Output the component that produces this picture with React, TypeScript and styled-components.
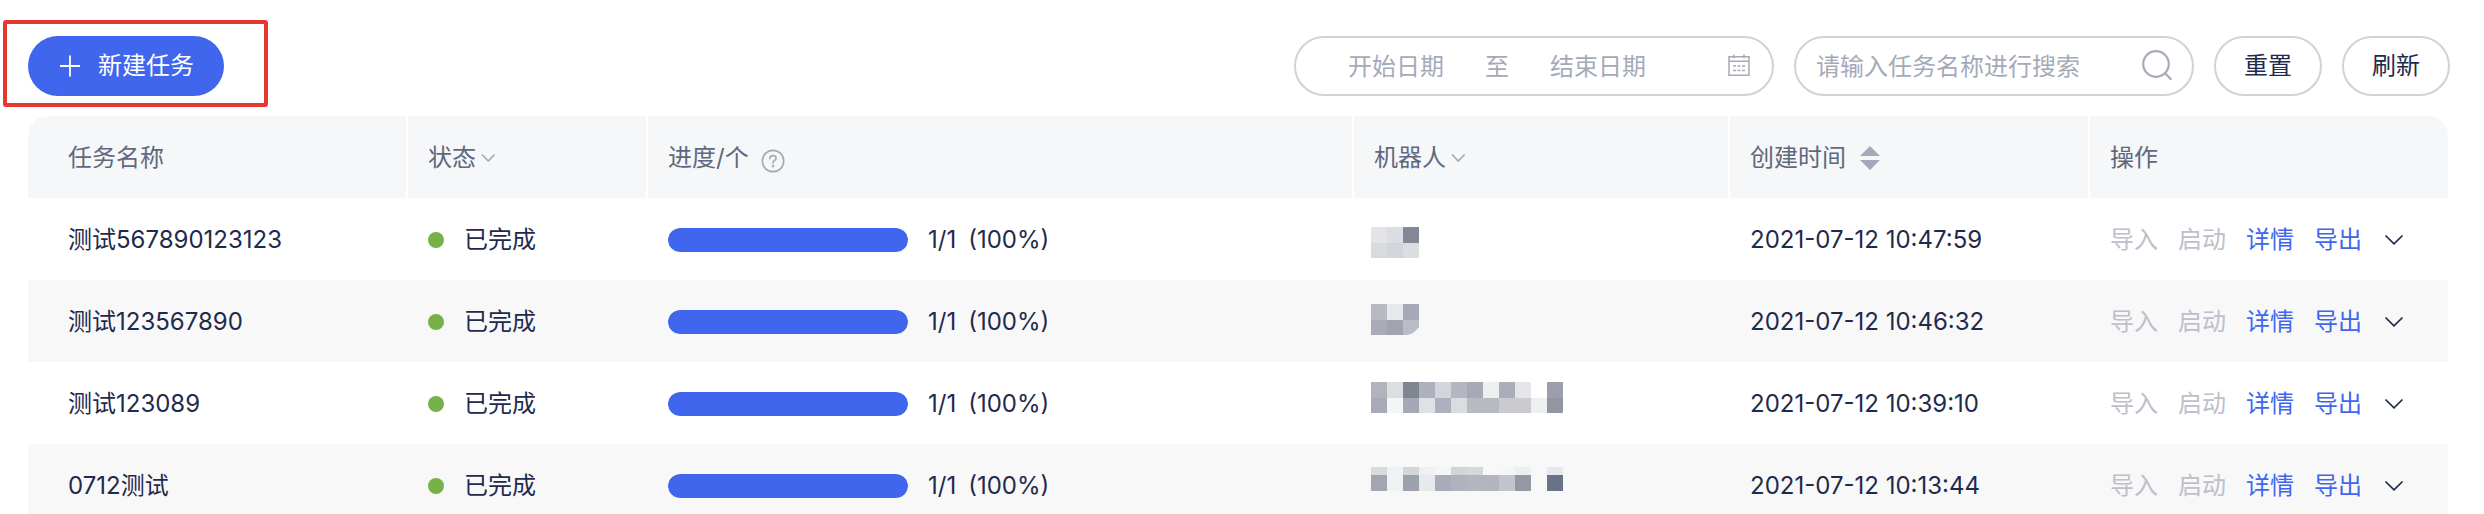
import React from "react";
import styled, { createGlobalStyle } from "styled-components";

const color = {
  primary: "#4066ee",
  text: "#1f2a4d",
  head: "#60687d",
  muted: "#a5aab8",
  disabled: "#bdc0ca",
  border: "#d0d1da",
  headBg: "#f5f7f8",
  stripe: "#f8f8f9",
  success: "#76b14a",
  mark: "#e23a31",
};

const GlobalStyle = createGlobalStyle`
  *, *::before, *::after { box-sizing: border-box; }
  body {
    margin: 0;
    overflow: hidden;
    background: #fff;
    color: ${color.text};
    font: 400 24px/36px Inter, "Noto Sans CJK SC", sans-serif;
  }
  button, input { font: inherit; color: inherit; }
  button { cursor: pointer; }
`;

const Page = styled.main`
  padding: 36px 34px 0 28px;
`;

const Toolbar = styled.header`
  display: flex;
  align-items: center;
  justify-content: space-between;
  margin-bottom: 20px;
`;

const Filters = styled.form`
  display: flex;
  gap: 20px;
`;

const Highlight = styled.div`
  position: relative;

  &::after {
    content: "";
    position: absolute;
    inset: -16px -44px -11px -25px;
    border: 4px solid ${color.mark};
    border-radius: 3px;
    pointer-events: none;
  }
`;

const PillButton = styled.button<{ $primary?: boolean }>`
  display: flex;
  align-items: center;
  gap: 16px;
  height: 60px;
  padding: 0 ${(p) => (p.$primary ? 30 : 28)}px;
  border: ${(p) => (p.$primary ? "none" : `2px solid ${color.border}`)};
  border-radius: 30px;
  background: ${(p) => (p.$primary ? color.primary : "#fff")};
  color: ${(p) => (p.$primary ? "#fff" : color.text)};
`;

const Field = styled.div<{ $width: number }>`
  display: flex;
  align-items: center;
  width: ${(p) => p.$width}px;
  height: 60px;
  padding: 2px 20px 0;
  border: 2px solid ${color.border};
  border-radius: 30px;
  background: #fff;
  color: ${color.muted};

  svg {
    flex: none;
    margin-left: auto;
  }
`;

const TextInput = styled.input<{ $center?: boolean }>`
  flex: ${(p) => (p.$center ? "0 0 160px" : "1")};
  min-width: 0;
  height: 36px;
  padding: 0;
  border: 0;
  outline: 0;
  background: none;
  color: ${color.text};
  text-align: ${(p) => (p.$center ? "center" : "left")};

  &::placeholder {
    color: ${color.muted};
    opacity: 1;
  }
`;

const RangeSeparator = styled.span`
  width: 42px;
  text-align: center;
`;

const TableWrap = styled.div`
  margin-right: 2px;
`;

const Table = styled.table`
  width: 100%;
  table-layout: fixed;
  border-spacing: 0;
`;

const HeadCell = styled.th`
  height: 82px;
  padding: 2px 20px 0;
  border-right: 2px solid #fff;
  background: ${color.headBg};
  color: ${color.head};
  font-weight: 400;
  text-align: left;

  &:first-child {
    padding-left: 40px;
    border-top-left-radius: 20px;
  }
  &:last-child {
    border-right: 0;
    border-top-right-radius: 20px;
  }
`;

const HeadLabel = styled.div<{ $gap?: number }>`
  display: flex;
  align-items: center;
  gap: ${(p) => p.$gap ?? 0}px;
`;

const IconButton = styled.button`
  display: flex;
  padding: 0;
  border: 0;
  background: none;
  color: ${color.muted};
`;

const Row = styled.tr`
  &:nth-child(even) {
    background: ${color.stripe};
  }
`;

const Cell = styled.td`
  height: 82px;
  padding: 2px 20px 0;

  &:first-child {
    padding-left: 40px;
  }
`;

const MosaicCell = styled(Cell)`
  padding: 0 17px;

  svg {
    display: block;
  }
`;

const Inline = styled.div`
  display: flex;
  align-items: center;
  gap: 20px;
`;

const Dot = styled.span`
  width: 16px;
  height: 16px;
  border-radius: 50%;
  background: ${color.success};
`;

const Track = styled.div`
  width: 240px;
  height: 24px;
  border-radius: 12px;
  background: #e9ecf3;
  overflow: hidden;
`;

const Fill = styled.div`
  height: 100%;
  border-radius: 12px;
  background: ${color.primary};
`;

const Count = styled.span`
  display: flex;
  gap: 12px;
`;

const Action = styled.button`
  padding: 0;
  border: 0;
  background: none;
  color: ${color.primary};
  white-space: nowrap;

  &:disabled {
    color: ${color.disabled};
    cursor: default;
  }
`;

const MoreButton = styled(IconButton)`
  color: ${color.text};
`;

const PlusIcon = () => (
  <svg width="24" height="24" viewBox="0 0 24 24" stroke="currentColor" strokeWidth="1.8" aria-hidden="true">
    <path d="M2 12H22M12 1.5V22.5" />
  </svg>
);

const CalendarIcon = () => (
  <svg width="24" height="26" viewBox="0 0 24 26" fill="none" stroke="currentColor" strokeWidth="1.5" aria-hidden="true">
    <path d="M1 2.8H21V21.2H1ZM1 7.2H21M6 0.5V4.2M16 0.5V4.2" />
    <path d="M5 12H17M5 16.5H17" strokeDasharray="3 1.5" />
  </svg>
);

const SearchIcon = () => (
  <svg width="32" height="34" viewBox="0 0 32 34" fill="none" stroke="currentColor" strokeWidth="2.2" strokeLinecap="round" aria-hidden="true">
    <circle cx="16" cy="14" r="12.8" />
    <path d="M25 23.2L30.8 29" />
  </svg>
);

const HelpIcon = () => (
  <svg width="24" height="30" viewBox="0 0 24 30" fill="none" stroke="currentColor" strokeWidth="1.7" strokeLinecap="round" aria-hidden="true">
    <circle cx="12" cy="18" r="10.7" />
    <path d="M8.9 15.4C8.9 13.7 10.1 12.6 12 12.6S15.1 13.7 15.1 15.2C15.1 17.4 12 17.5 12 20" />
    <circle cx="12" cy="23.2" r="0.5" />
  </svg>
);

const SmallChevron = () => (
  <svg width="24" height="24" viewBox="0 0 24 24" fill="none" stroke="currentColor" strokeWidth="1.7" aria-hidden="true">
    <path d="M6 8.5L12.3 15L18.6 8.5" />
  </svg>
);

const MoreChevron = () => (
  <svg width="24" height="24" viewBox="0 0 24 24" fill="none" stroke="currentColor" strokeWidth="1.7" aria-hidden="true">
    <path d="M3.5 7.5L12 15.8L20.5 7.5" />
  </svg>
);

const SortIcon = () => (
  <svg width="20" height="24" viewBox="0 0 20 24" fill="currentColor" aria-hidden="true">
    <path d="M10 0L20 10H0ZM10 24L20 14H0Z" />
  </svg>
);

type Tile = [x: number, y: number, fill: string];

interface Task {
  name: string;
  done: number;
  total: number;
  created: string;
  top: number;
  firstRow: number;
  rounded?: boolean;
  tiles: [string[], string[]];
}

const tasks: Task[] = [
  {
    name: "测试567890123123",
    done: 1,
    total: 1,
    created: "2021-07-12 10:47:59",
    top: 28,
    firstRow: 16,
    tiles: [
      ["#e3e4e8", "#dcdde2", "#838896"],
      ["#d9dade", "#d4d5da", "#dcdde1"],
    ],
  },
  {
    name: "测试123567890",
    done: 1,
    total: 1,
    created: "2021-07-12 10:46:32",
    top: 23,
    firstRow: 16,
    rounded: true,
    tiles: [
      ["#b6bac3", "#e7e8ec", "#a7aab6"],
      ["#a9acb7", "#a1a4b0", "#bbbdc6"],
    ],
  },
  {
    name: "测试123089",
    done: 1,
    total: 1,
    created: "2021-07-12 10:39:10",
    top: 19,
    firstRow: 16,
    tiles: [
      ["#b1b4bd", "#dddee1", "#80858f", "#adb0bd", "#d4d5da", "#b4b7bf", "#a5aab5", "#eeeff1", "#abaeb9", "#e5e6ea", "", "#9a9fab"],
      ["#a7aab7", "#f4f5f6", "#a6a9b5", "#e0e1e6", "#adb0be", "#dbdce0", "#b6bac3", "#b6bac3", "#cacbd0", "#cacbd0", "#eeeff1", "#9296a3"],
    ],
  },
  {
    name: "0712测试",
    done: 1,
    total: 1,
    created: "2021-07-12 10:13:44",
    top: 22,
    firstRow: 8,
    tiles: [
      ["#d9dade", "#f0f1f3", "#d4d5da", "#eff0f2", "#f4f5f6", "#d4d5d9", "#d7d8dc", "", "#f5f6f7", "#eeeff1", "", "#e7e8eb"],
      ["#a3a6b2", "#f0f1f3", "#9ca1ae", "#e8e9ed", "#a9acb8", "#b0b3bd", "#b3b6bf", "#b1b5c0", "#c2c5cc", "#9298a4", "", "#6b7186"],
    ],
  },
];

const Mosaic = ({ task }: { task: Task }) => {
  const { tiles, top, firstRow, rounded } = task;
  const cells: Tile[] = tiles.flatMap((line, row) =>
    line.map((fill, i): Tile => [i * 16, top + row * firstRow, fill]),
  );
  return (
    <svg width="192" height="80" viewBox="0 0 192 80" role="img" aria-label="机器人">
      {cells.map(([x, y, fill], i) => {
        if (!fill) return null;
        const isFirst = i < tiles[0].length;
        if (rounded && i === cells.length - 1) {
          return <path key={i} fill={fill} d={`M${x} ${y}h16v7q-5 7 -12 8h-4z`} />;
        }
        return (
          <rect key={i} x={x} y={y} width="16" height={isFirst ? firstRow : firstRow === 8 ? 16 : 15} fill={fill} />
        );
      })}
    </svg>
  );
};

export default function App() {
  return (
    <>
      <GlobalStyle />
      <Page>
        <Toolbar>
          <Highlight>
            <PillButton $primary type="button">
              <PlusIcon />
              新建任务
            </PillButton>
          </Highlight>
          <Filters onSubmit={(e) => e.preventDefault()}>
            <Field $width={480}>
              <TextInput $center aria-label="开始日期" placeholder="开始日期" />
              <RangeSeparator>至</RangeSeparator>
              <TextInput $center aria-label="结束日期" placeholder="结束日期" />
              <CalendarIcon />
            </Field>
            <Field $width={400}>
              <TextInput aria-label="任务名称" placeholder="请输入任务名称进行搜索" />
              <SearchIcon />
            </Field>
            <PillButton type="reset">重置</PillButton>
            <PillButton type="button">刷新</PillButton>
          </Filters>
        </Toolbar>

        <TableWrap>
          <Table>
            <colgroup>
              <col width="380" />
              <col width="240" />
              <col />
              <col width="376" />
              <col width="360" />
              <col width="358" />
            </colgroup>
            <thead>
              <tr>
                <HeadCell scope="col">任务名称</HeadCell>
                <HeadCell scope="col">
                  <HeadLabel>
                    状态
                    <IconButton type="button" aria-label="筛选状态">
                      <SmallChevron />
                    </IconButton>
                  </HeadLabel>
                </HeadCell>
                <HeadCell scope="col">
                  <HeadLabel $gap={12}>
                    进度/个
                    <IconButton type="button" aria-label="进度说明">
                      <HelpIcon />
                    </IconButton>
                  </HeadLabel>
                </HeadCell>
                <HeadCell scope="col">
                  <HeadLabel>
                    机器人
                    <IconButton type="button" aria-label="筛选机器人">
                      <SmallChevron />
                    </IconButton>
                  </HeadLabel>
                </HeadCell>
                <HeadCell scope="col">
                  <HeadLabel $gap={14}>
                    创建时间
                    <IconButton type="button" aria-label="按创建时间排序">
                      <SortIcon />
                    </IconButton>
                  </HeadLabel>
                </HeadCell>
                <HeadCell scope="col">操作</HeadCell>
              </tr>
            </thead>
            <tbody>
              {tasks.map((task) => {
                const percent = Math.round((task.done / task.total) * 100);
                return (
                  <Row key={task.name}>
                    <Cell>{task.name}</Cell>
                    <Cell>
                      <Inline>
                        <Dot />
                        已完成
                      </Inline>
                    </Cell>
                    <Cell>
                      <Inline>
                        <Track role="progressbar" aria-label="进度" aria-valuenow={percent}>
                          <Fill style={{ width: `${percent}%` }} />
                        </Track>
                        <Count>
                          <span>{`${task.done}/${task.total}`}</span>
                          <span>{`(${percent}%)`}</span>
                        </Count>
                      </Inline>
                    </Cell>
                    <MosaicCell>
                      <Mosaic task={task} />
                    </MosaicCell>
                    <Cell>{task.created}</Cell>
                    <Cell>
                      <Inline>
                        <Action type="button" disabled>导入</Action>
                        <Action type="button" disabled>启动</Action>
                        <Action type="button">详情</Action>
                        <Action type="button">导出</Action>
                        <MoreButton type="button" aria-label="更多操作">
                          <MoreChevron />
                        </MoreButton>
                      </Inline>
                    </Cell>
                  </Row>
                );
              })}
            </tbody>
          </Table>
        </TableWrap>
      </Page>
    </>
  );
}
